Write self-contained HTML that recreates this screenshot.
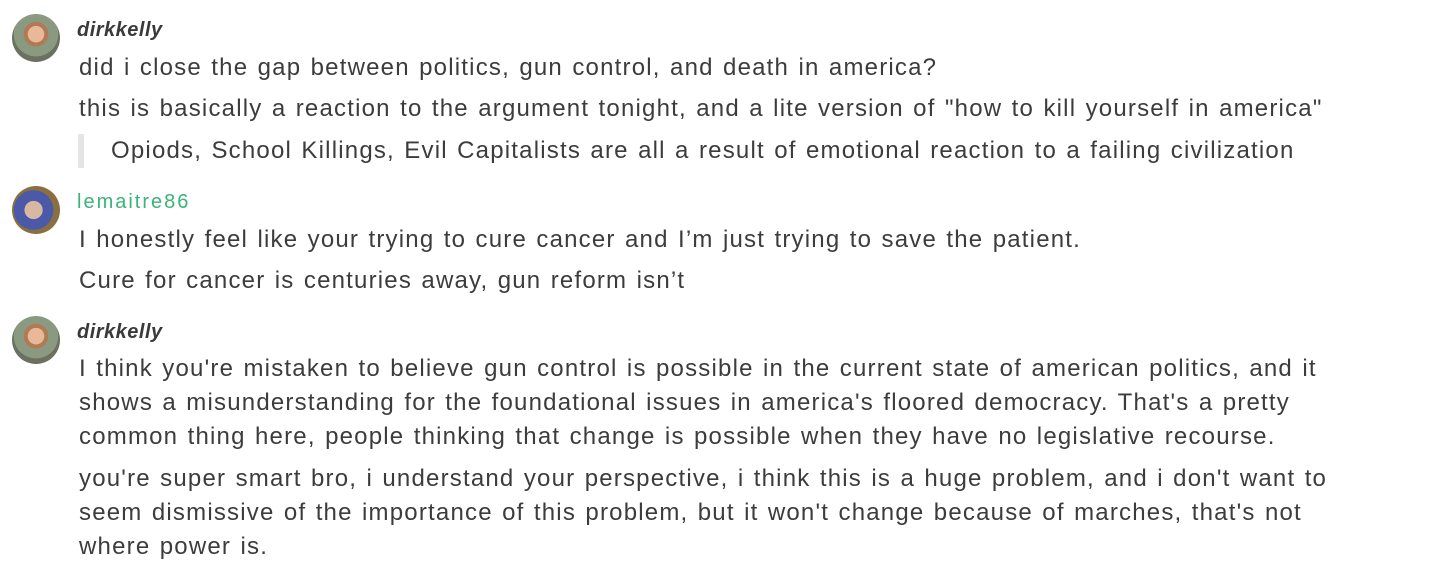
<!DOCTYPE html>
<html><head><style>
body{margin:0;background:#fff;width:1430px;height:580px;overflow:hidden;font-family:"Liberation Sans",sans-serif;color:#333;}
.a{position:absolute;left:12px;width:48px;height:48px;border-radius:50%;overflow:hidden}
.n{position:absolute;left:77px;font-size:20px;font-weight:bold;font-style:italic;color:#3a3a3a;letter-spacing:0.5px}
.t{position:absolute;left:79px;font-size:24px;line-height:34px;white-space:nowrap;color:#3c3c3c;letter-spacing:1.2px;word-spacing:1.5px}
</style></head><body>
<div class="a" style="top:14px;background:radial-gradient(circle at 50% 42%,#e8b898 0 22%,#b07a55 23% 33%,#8a9a80 34% 60%,#6b7060 61%)"></div>
<div class="n" style="top:19px">dirkkelly</div>
<div class="t" style="top:51px">did i close the gap between politics, gun control, and death in america?</div>
<div class="t" style="top:92px">this is basically a reaction to the argument tonight, and a lite version of "how to kill yourself in america"</div>
<div style="position:absolute;left:78px;top:134px;width:6px;height:34px;background:#e5e5e5"></div>
<div class="t" style="top:134px;left:111px">Opiods, School Killings, Evil Capitalists are all a result of emotional reaction to a failing civilization</div>
<div class="a" style="top:186px;background:radial-gradient(circle at 45% 50%,#d8b8a0 0 25%,#4a5aa8 26% 55%,#8a7040 56%)"></div>
<div class="n" style="top:191px;font-weight:normal;font-style:normal;color:#3bb37a;letter-spacing:2px">lemaitre86</div>
<div class="t" style="top:223px">I honestly feel like your trying to cure cancer and I’m just trying to save the patient.</div>
<div class="t" style="top:264px">Cure for cancer is centuries away, gun reform isn’t</div>
<div class="a" style="top:316px;background:radial-gradient(circle at 50% 42%,#e8b898 0 22%,#b07a55 23% 33%,#8a9a80 34% 60%,#6b7060 61%)"></div>
<div class="n" style="top:321px">dirkkelly</div>
<div class="t" style="top:352px">I think you're mistaken to believe gun control is possible in the current state of american politics, and it<br>shows a misunderstanding for the foundational issues in america's floored democracy. That's a pretty<br>common thing here, people thinking that change is possible when they have no legislative recourse.</div>
<div class="t" style="top:462px">you're super smart bro, i understand your perspective, i think this is a huge problem, and i don't want to<br>seem dismissive of the importance of this problem, but it won't change because of marches, that's not<br>where power is.</div>
</body></html>
